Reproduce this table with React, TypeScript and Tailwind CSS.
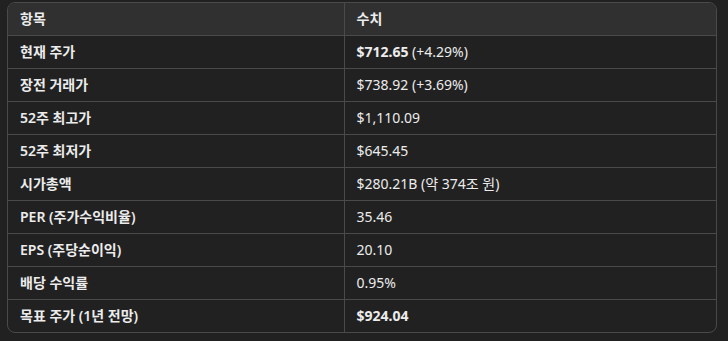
import React from 'react';

interface Row {
  label: string;
  value: string;
  strong?: string;
}

const rows: Row[] = [
  { label: '현재 주가', value: ' (+4.29%)', strong: '$712.65' },
  { label: '장전 거래가', value: '$738.92 (+3.69%)' },
  { label: '52주 최고가', value: '$1,110.09' },
  { label: '52주 최저가', value: '$645.45' },
  { label: '시가총액', value: '$280.21B (약 374조 원)' },
  { label: 'PER (주가수익비율)', value: '35.46' },
  { label: 'EPS (주당순이익)', value: '20.10' },
  { label: '배당 수익률', value: '0.95%' },
  { label: '목표 주가 (1년 전망)', value: '', strong: '$924.04' },
];

export default function App() {
  return (
    <div
      className="w-[728px] h-[341px] bg-[#212121] pt-[2px] pl-[7px] text-[14px] text-[#ececec]"
      style={{ fontFamily: '"Segoe UI", "Noto Sans", "Noto Sans CJK KR", sans-serif' }}
    >
      <div className="w-[710px] rounded-lg border border-[#4a4a4a] overflow-hidden">
        <table className="w-full border-collapse">
          <thead>
            <tr className="h-[32px] bg-[#303030]">
              <th className="w-[336px] px-3 text-left font-semibold border-r border-[#4a4a4a]">항목</th>
              <th className="px-3 text-left font-semibold">수치</th>
            </tr>
          </thead>
          <tbody>
            {rows.map((row) => (
              <tr key={row.label} className="h-[33px] border-t border-[#4a4a4a]">
                <td className="px-3 font-semibold border-r border-[#4a4a4a]">{row.label}</td>
                <td className="px-3">
                  {row.strong && <span className="font-bold">{row.strong}</span>}
                  {row.value}
                </td>
              </tr>
            ))}
          </tbody>
        </table>
      </div>
    </div>
  );
}
